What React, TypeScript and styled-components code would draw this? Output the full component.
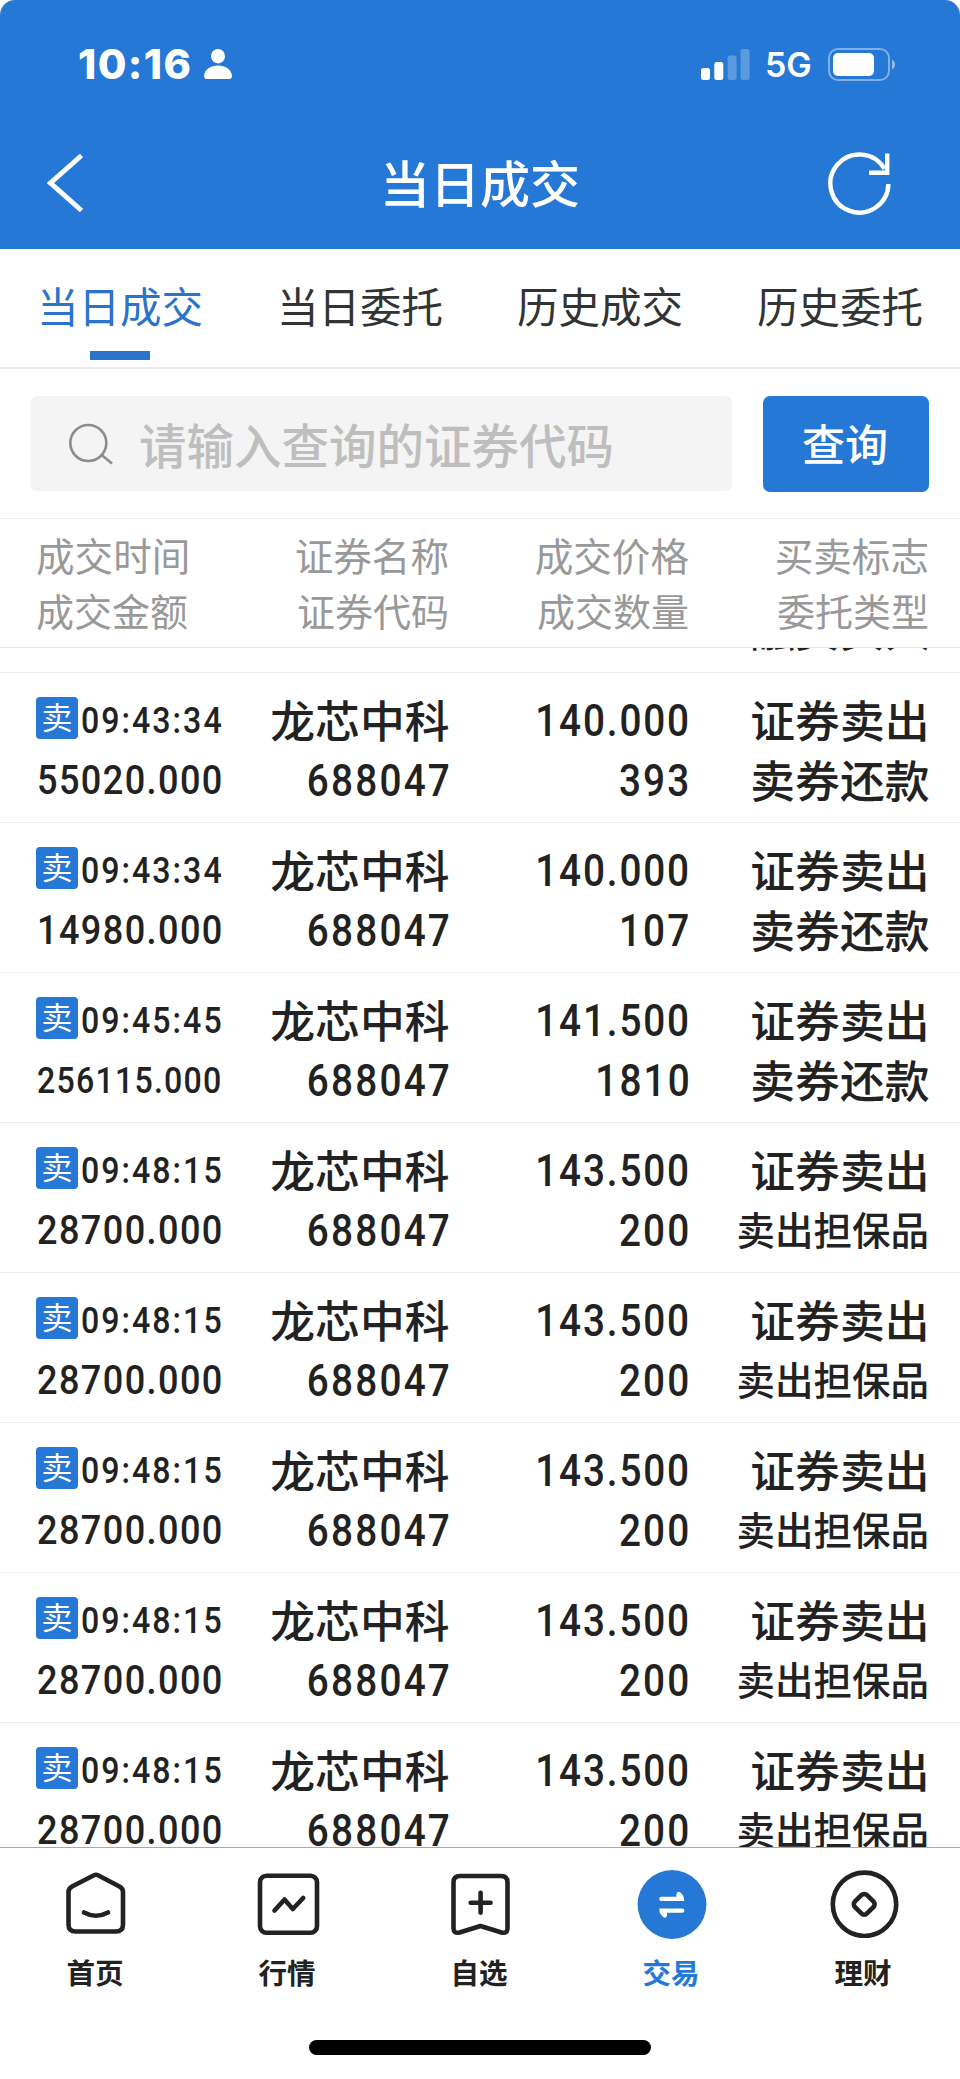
import React from "react";
import styled, { createGlobalStyle } from "styled-components";

const BLUE = "#2578d5";
const CJK = '"Noto Sans CJK SC", sans-serif';

const Global = createGlobalStyle`
  * { box-sizing: border-box; }
  body { margin: 0; background: #fff; font-family: ${CJK}; color: #222; }
`;
const Screen = styled.div`
  width: 960px; height: 2079px; display: flex; flex-direction: column;
  overflow: hidden; background: #fff;
`;
const Top = styled.header`
  height: 249px; flex: none; background: ${BLUE}; color: #fff;
  border-radius: 15px 15px 0 0;
`;
const StatusBar = styled.div`
  height: 128px; padding: 0 65px 0 78px; display: flex; align-items: center;
  justify-content: space-between; font-family: Inter, sans-serif;
`;
const StatusGroup = styled.div<{ $gap: number }>`
  display: flex; align-items: center; gap: ${p => p.$gap}px;
`;
const Clock = styled.span`font-size: 41.5px; font-weight: 800; letter-spacing: 1.4px;`;
const Network = styled.span`
  font-size: 34px; font-weight: 600; letter-spacing: -0.2px; line-height: 36px; padding: 2px 1px 0 0;
`;
const TitleBar = styled.div`
  height: 110px; display: grid; grid-template-columns: 200px 1fr 200px; align-items: center;
`;
const Title = styled.h1`
  margin: 0; padding-bottom: 5px; text-align: center; font-size: 50px; font-weight: 500; line-height: 60px;
`;
const BarIcon = styled.div<{ $right?: boolean }>`
  display: flex; justify-content: ${p => (p.$right ? "flex-end" : "flex-start")};
  padding: ${p => (p.$right ? "0 67px 0 0" : "0 0 0 45px")};
`;
const Tabs = styled.nav`
  height: 120px; flex: none; display: grid; grid-template-columns: repeat(4, 1fr);
  border-bottom: 2px solid #ebebeb;
`;
const Tab = styled.div<{ $active?: boolean }>`
  display: flex; flex-direction: column; align-items: center; padding-top: 26px;
  font-size: 41.5px; line-height: 60px; color: ${p => (p.$active ? "#2b73cb" : "#333")};
  &::after {
    content: ""; width: 60px; height: 9px; margin-top: 16px;
    background: ${p => (p.$active ? "#2b73cb" : "transparent")};
  }
`;
const SearchBar = styled.div`
  height: 149px; flex: none; padding: 27px 31px 0 31px; display: flex; gap: 31px;
`;
const SearchBox = styled.div`
  width: 701px; height: 95px; border-radius: 6px; background: #f4f4f4; color: #bebebe;
  display: flex; align-items: center; gap: 25px; padding-left: 37px;
`;
const Placeholder = styled.span`font-size: 47.5px; font-weight: 500; line-height: 60px;`;
const SearchButton = styled.button`
  width: 166px; height: 96px; border: 0; border-radius: 7px; background: ${BLUE}; color: #fff;
  font: 500 43px/60px ${CJK}; padding: 0 2px 4px 0;
`;
const columns = `
  display: grid; grid-template-columns: 190px 224px 240px 240px; padding-left: 36px;
`;
const ColumnHeads = styled.div`
  ${columns}
  height: 130px; flex: none; padding-top: 8px; border-top: 1px solid #eee; border-bottom: 1px solid #e8e8e8;
  color: #999;
`;
const Head = styled.div<{ $left?: boolean }>`
  text-align: ${p => (p.$left ? "left" : "right")}; padding-right: 1px;
  font-size: 38.6px; line-height: 55px;
  & > span { display: block; }
  & > span + span { font-size: 38px; }
`;
const List = styled.main`height: 1199px; flex: none; overflow: hidden;`;
const Row = styled.section`
  ${columns}
  height: 150px; padding-top: 17px; border-bottom: 1px solid #ececec;
`;
const ScrolledRow = styled.section`
  height: 25px; padding-right: 30px; overflow: hidden; border-bottom: 1px solid #ececec;
  display: flex; justify-content: flex-end; align-items: flex-end;
`;
const Cell = styled.div<{ $left?: boolean }>`
  display: flex; flex-direction: column; align-items: ${p => (p.$left ? "flex-start" : "flex-end")};
`;
const Words = styled.span<{ $small?: boolean }>`
  font-size: ${p => (p.$small ? 38.5 : 44.8)}px; font-weight: 500; height: 60px; white-space: nowrap;
  line-height: ${p => (p.$small ? 56 : 58)}px; padding-right: ${p => (p.$small ? 1 : 0.5)}px;
`;
const ScrolledWords = styled(Words)`flex: none; margin-bottom: 13px;`;
/* Numerals are narrowed, with wider tracking, for a DIN-like face. */
const Digits = styled.span<{ $size?: number; $track?: number; $left?: boolean }>`
  font-family: Roboto, sans-serif; font-weight: 500; white-space: nowrap;
  font-size: ${p => p.$size ?? 44}px; letter-spacing: ${p => p.$track ?? 2.5}px;
  margin-right: ${p => -(p.$track ?? 2.5) + 0.8}px;
  line-height: ${p => (p.$left ? 61 : 63)}px; height: 60px;
  transform: scaleX(0.88); transform-origin: ${p => (p.$left ? "left" : "right")} center;
`;
const AmountDigits = styled(Digits)`margin-left: 0.5px;`;
const TimeLine = styled.div`display: flex; height: 60px; align-items: center; gap: 3px;`;
const SellBadge = styled.span`
  width: 42px; height: 42px; margin-bottom: 5px; border-radius: 4px; background: ${BLUE}; color: #fff;
  font-size: 31px; line-height: 38px; text-align: center;
`;
const Footer = styled.footer`flex: 1; border-top: 1px solid #a8a8a8; background: #fff;`;
const NavItems = styled.nav`display: grid; grid-template-columns: repeat(5, 1fr); height: 192px;`;
const NavItem = styled.div<{ $active?: boolean }>`
  display: flex; flex-direction: column; align-items: center; padding-top: 20px; gap: 13px;
  color: ${p => (p.$active ? BLUE : "#222")};
`;
const NavLabel = styled.span`font-size: 28.5px; font-weight: 700; line-height: 42px; padding-right: 2px;`;
const HomeIndicator = styled.div`width: 342px; height: 15px; margin: 0 auto; border-radius: 8px; background: #000;`;

const PersonIcon = () => (
  <svg width="28" height="30" viewBox="0 0 28 30" fill="#fff">
    <ellipse cx="14" cy="7.2" rx="7" ry="7.2" />
    <path d="M0 26.5C1 20 7 16.5 14 16.5S27 20 28 26.5C28 29 27 30 25 30H3C1 30 0 29 0 26.5Z" />
  </svg>
);
const SignalIcon = () => (
  <svg width="49" height="31" viewBox="0 0 49 31" fill="#fff">
    <rect x="0" y="19" width="9" height="12" rx="2.5" />
    <rect x="13.3" y="13" width="9" height="18" rx="2.5" />
    <rect x="26.6" y="6.5" width="9" height="24.5" rx="2.5" opacity=".25" />
    <rect x="39.6" y="0" width="9" height="31" rx="2.5" opacity=".25" />
  </svg>
);
const BatteryIcon = () => (
  <svg width="67" height="33" viewBox="0 0 67 33" fill="none">
    <rect x="1" y="1" width="60" height="31" rx="9" stroke="#fff" strokeOpacity=".42" strokeWidth="2" />
    <rect x="5" y="5" width="41" height="23" rx="5" fill="#fff" />
    <path d="M64 11.5C68 13.5 68 19.5 64 21.5Z" fill="#fff" fillOpacity=".5" />
  </svg>
);
const BackIcon = () => (
  <svg width="42" height="60" viewBox="0 0 42 60" fill="none" stroke="#fff" strokeWidth="5">
    <path d="M36.5 2.5L5.5 30L36.5 57.5" />
  </svg>
);
const RefreshIcon = () => (
  <svg width="66" height="66" viewBox="0 0 66 66" fill="none" stroke="#fff" strokeWidth="4.4">
    <path d="M61.4 34A29 29 0 1 1 57.5 19" />
    <path d="M60.2 3.5V22.8H42" />
  </svg>
);
const SearchIcon = () => (
  <svg width="46" height="42" viewBox="0 0 46 42" fill="none" stroke="#8c8c8c" strokeWidth="2.6">
    <circle cx="20.3" cy="20" r="18" />
    <path d="M33 31.5L44 40.5" />
  </svg>
);
const navStroke = { fill: "none", stroke: "#222", strokeWidth: 4.6, strokeLinecap: "round", strokeLinejoin: "round" } as const;
const HomeIcon = () => (
  <svg width="70" height="70" viewBox="0 0 70 70" {...navStroke}>
    <path d="M33 7.2Q35 6.2 37 7.2L58.5 18.5Q62 20.5 62 24V56.5Q62 63.5 55 63.5H14.5Q7.5 63.5 7.5 56.5V24Q7.5 20.5 11 18.5Z" />
    <path d="M23 44.5Q35 51 47 44.5" />
  </svg>
);
const MarketIcon = () => (
  <svg width="70" height="70" viewBox="0 0 70 70" {...navStroke}>
    <rect x="7" y="7.8" width="57" height="57" rx="6.5" />
    <path d="M21.5 42.5L31.5 31.5L39.8 41L50.2 30" />
  </svg>
);
const WatchIcon = () => (
  <svg width="70" height="70" viewBox="0 0 70 70" {...navStroke}>
    <path d="M15 8H56Q62.5 8 62.5 14.5V60Q62.5 66 56.5 64.5L35.5 58L14.5 64.5Q8.5 66 8.5 60V14.5Q8.5 8 15 8Z" />
    <path d="M25.7 34.7H45.5M35.6 24.8V44.6" />
  </svg>
);
const TradeIcon = () => (
  <svg width="70" height="71" viewBox="0 0 70 71">
    <circle cx="35" cy="36.5" r="34.4" fill={BLUE} />
    <g fill="#fff">
      <path id="swap" d="M24.3 28.8H39.5V26Q40.5 22.5 43.5 24.5L46 27.5Q47.3 29.5 47.2 33H24.3A2.1 2.1 0 0 1 24.3 28.8Z" />
      <use href="#swap" transform="rotate(180 34.8 36.8)" />
    </g>
  </svg>
);
const WealthIcon = () => (
  <svg width="70" height="70" viewBox="0 0 70 70" {...navStroke}>
    <circle cx="35.5" cy="36.3" r="31.7" />
    <rect x="26.7" y="27.8" width="17" height="17" rx="4" transform="rotate(45 35.2 36.3)" />
  </svg>
);
const IconSlot = styled.div`height: 70px; display: flex; align-items: flex-start;`;

const heads = [
  ["成交时间", "成交金额"],
  ["证券名称", "证券代码"],
  ["成交价格", "成交数量"],
  ["买卖标志", "委托类型"],
];
type Trade = { time: string; amount: string; price: string; count: string; kind: string };
const collateral: Trade = { time: "09:48:15", amount: "28700.000", price: "143.500", count: "200", kind: "卖出担保品" };
const trades: Trade[] = [
  { time: "09:43:34", amount: "55020.000", price: "140.000", count: "393", kind: "卖券还款" },
  { time: "09:43:34", amount: "14980.000", price: "140.000", count: "107", kind: "卖券还款" },
  { time: "09:45:45", amount: "256115.000", price: "141.500", count: "1810", kind: "卖券还款" },
  collateral, collateral, collateral, collateral, collateral,
];
const navItems = [
  { label: "首页", Icon: HomeIcon },
  { label: "行情", Icon: MarketIcon },
  { label: "自选", Icon: WatchIcon },
  { label: "交易", Icon: TradeIcon, active: true },
  { label: "理财", Icon: WealthIcon },
];

export default function App() {
  return (
    <Screen>
      <Global />
      <Top>
        <StatusBar>
          <StatusGroup $gap={12}><Clock>10:16</Clock><PersonIcon /></StatusGroup>
          <StatusGroup $gap={15.5}><SignalIcon /><Network>5G</Network><BatteryIcon /></StatusGroup>
        </StatusBar>
        <TitleBar>
          <BarIcon><BackIcon /></BarIcon>
          <Title>当日成交</Title>
          <BarIcon $right><RefreshIcon /></BarIcon>
        </TitleBar>
      </Top>
      <Tabs>
        {["当日成交", "当日委托", "历史成交", "历史委托"].map((t, i) => <Tab key={t} $active={i === 0}>{t}</Tab>)}
      </Tabs>
      <SearchBar>
        <SearchBox><SearchIcon /><Placeholder>请输入查询的证券代码</Placeholder></SearchBox>
        <SearchButton>查询</SearchButton>
      </SearchBar>
      <ColumnHeads>
        {heads.map(([a, b], i) => <Head key={a} $left={i === 0}><span>{a}</span><span>{b}</span></Head>)}
      </ColumnHeads>
      <List>
        <ScrolledRow><ScrolledWords>融资买入</ScrolledWords></ScrolledRow>
        {trades.map((t, i) => (
          <Row key={i}>
            <Cell $left>
              <TimeLine><SellBadge>卖</SellBadge><Digits $left $size={36.5} $track={2.3}>{t.time}</Digits></TimeLine>
              <AmountDigits $left $size={t.amount.length > 9 ? 36.5 : 41} $track={t.amount.length > 9 ? 1.4 : 1.6}>{t.amount}</AmountDigits>
            </Cell>
            <Cell><Words>龙芯中科</Words><Digits>688047</Digits></Cell>
            <Cell><Digits $track={2.1}>{t.price}</Digits><Digits>{t.count}</Digits></Cell>
            <Cell><Words>证券卖出</Words><Words $small={t.kind.length > 4}>{t.kind}</Words></Cell>
          </Row>
        ))}
      </List>
      <Footer>
        <NavItems>
          {navItems.map(({ label, Icon, active }) => (
            <NavItem key={label} $active={active}><IconSlot><Icon /></IconSlot><NavLabel>{label}</NavLabel></NavItem>
          ))}
        </NavItems>
        <HomeIndicator />
      </Footer>
    </Screen>
  );
}
